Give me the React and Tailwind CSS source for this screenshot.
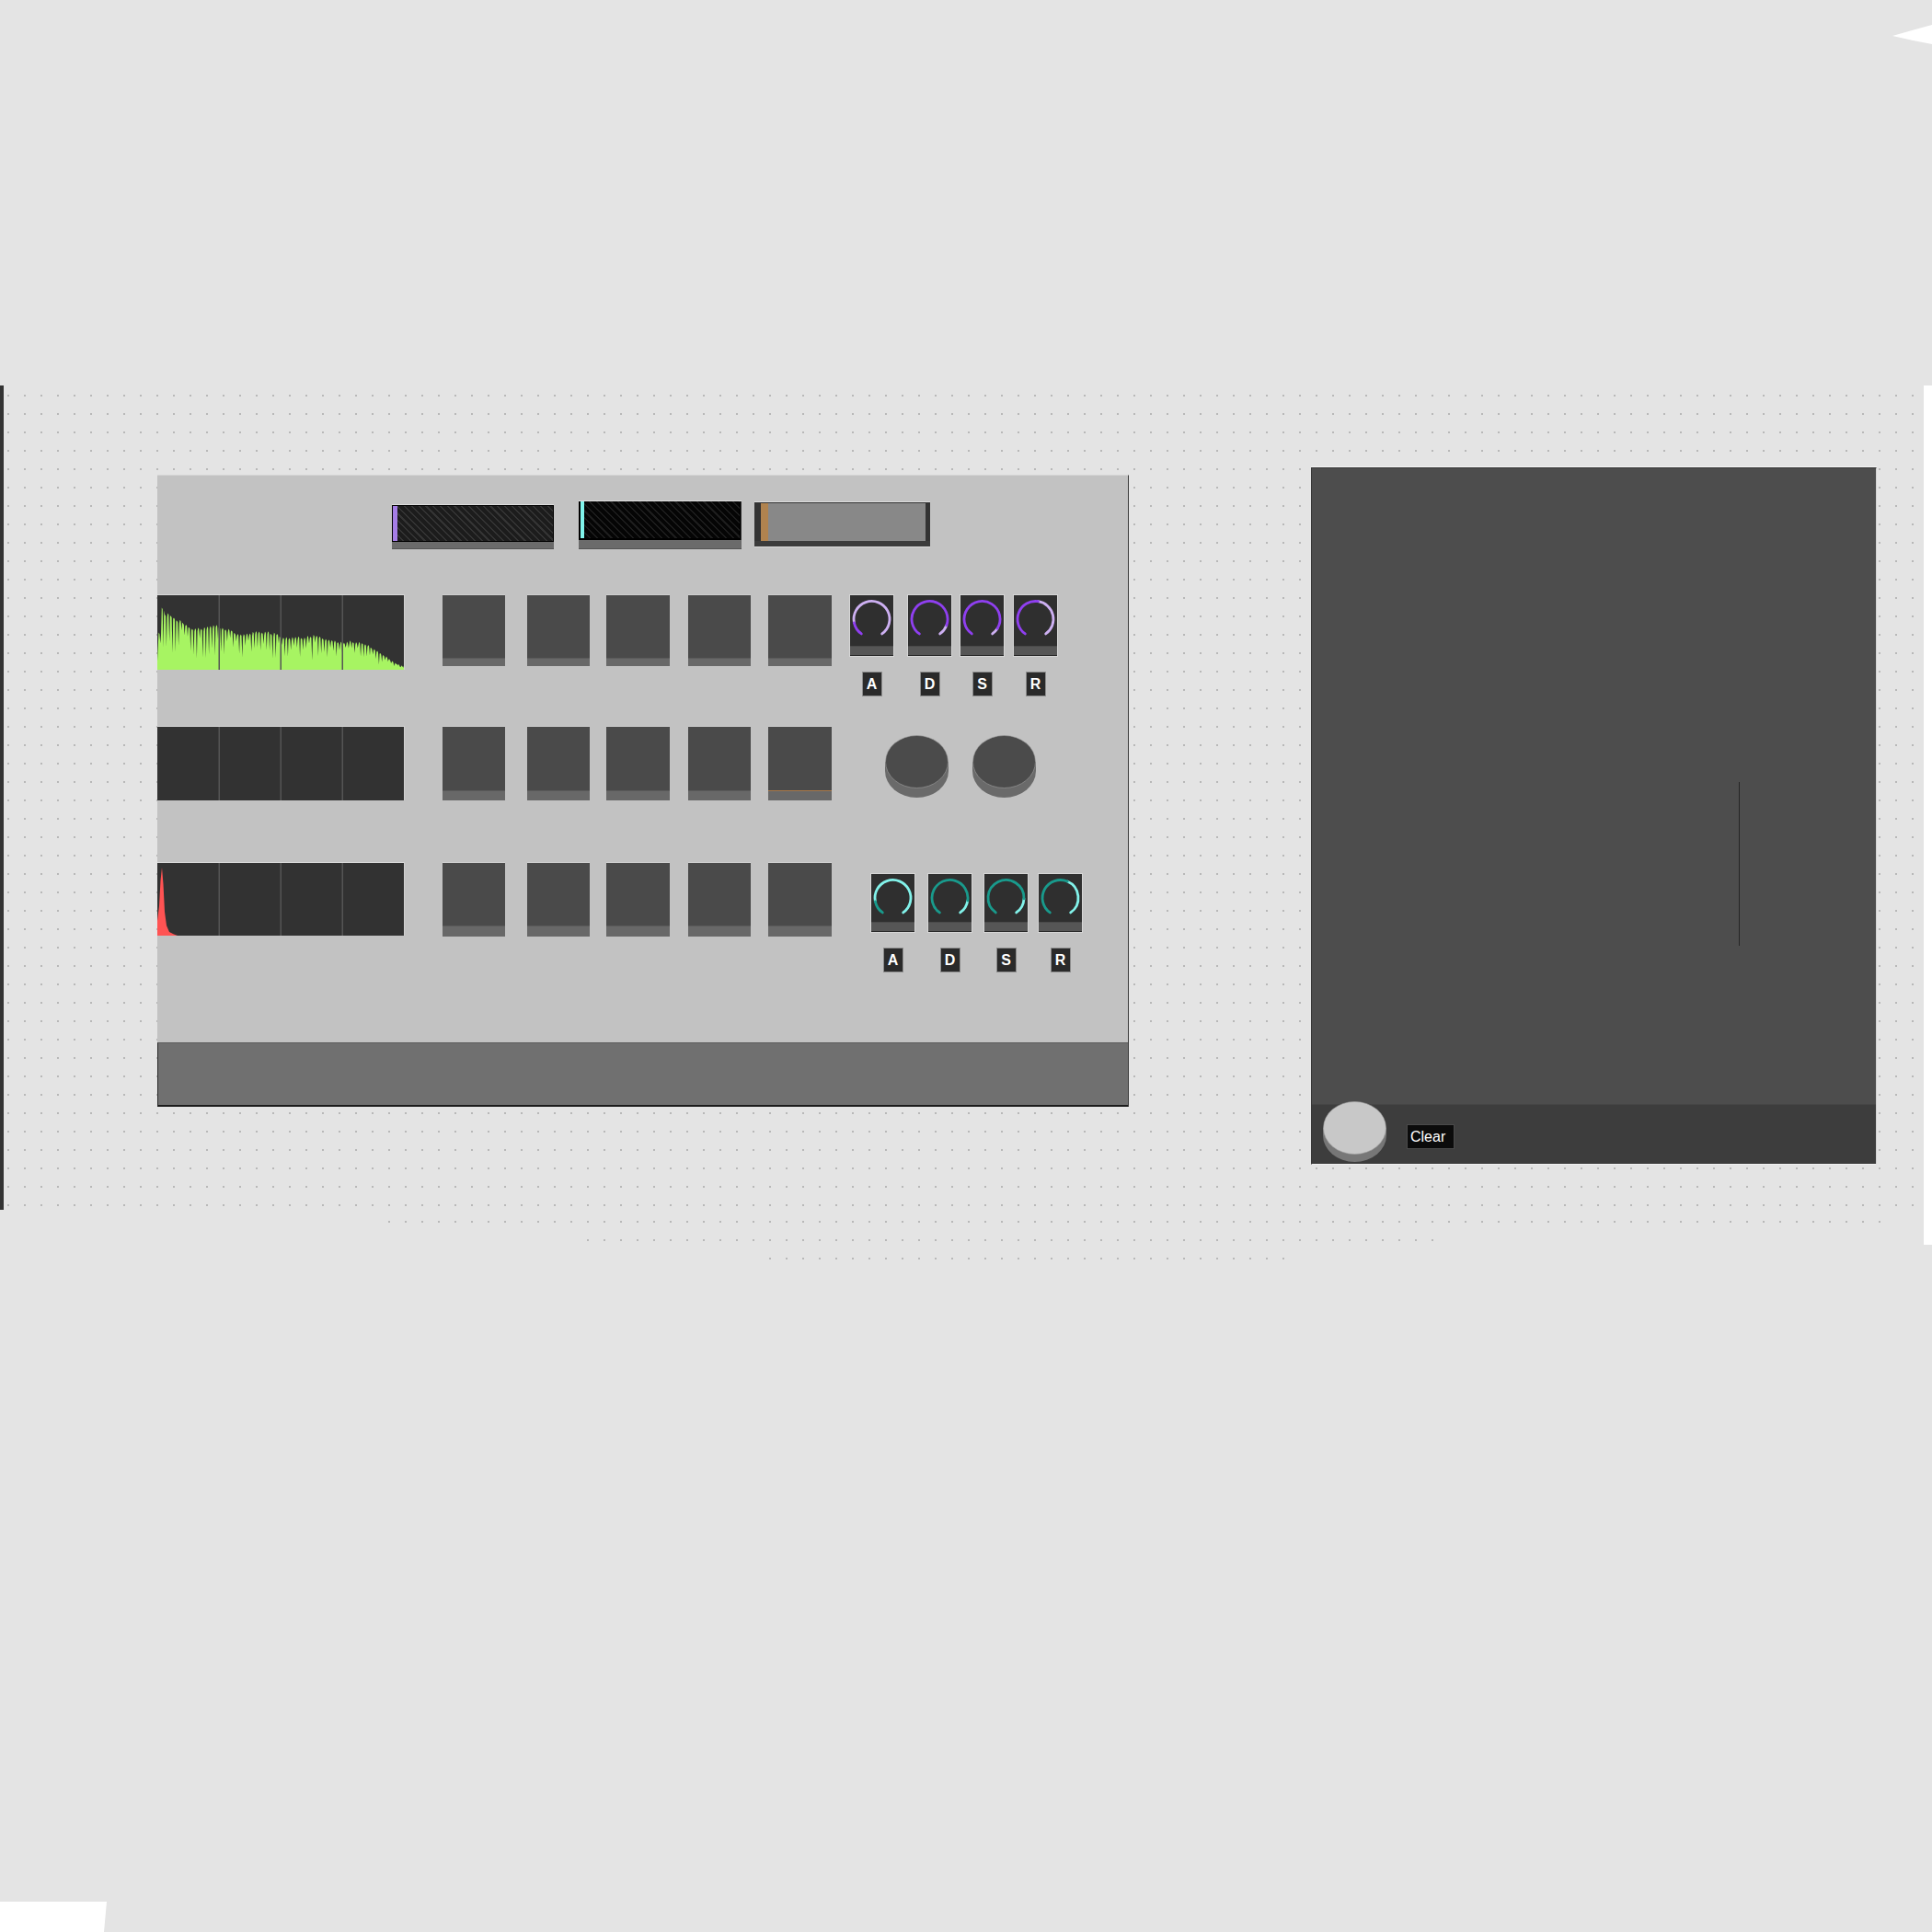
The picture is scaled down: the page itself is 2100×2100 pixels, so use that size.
import React from "react";

function rand(seed) {
  let s = seed;
  return () => {
    s = (s * 16807) % 2147483647;
    return (s - 1) / 2147483646;
  };
}

const envPts = [
  [0, 0.12], [0.01, 0.83], [0.03, 0.73], [0.06, 0.67], [0.15, 0.6], [0.25, 0.55],
  [0.4, 0.5], [0.5, 0.46], [0.6, 0.44], [0.72, 0.41], [0.8, 0.37], [0.87, 0.29],
  [0.92, 0.2], [0.96, 0.1], [1, 0.04],
];
function lerpEnv(t) {
  for (let i = 1; i < envPts.length; i++) {
    if (t <= envPts[i][0]) {
      const [t0, v0] = envPts[i - 1];
      const [t1, v1] = envPts[i];
      return v0 + ((v1 - v0) * (t - t0)) / (t1 - t0);
    }
  }
  return 0.04;
}
function makeGreen(W, H) {
  const r = rand(17);
  let d = `M0 ${H} L0 ${(H - 0.12 * H).toFixed(1)}`;
  for (let x = 1.5; x < W - 2; x += 3.3) {
    const t = x / W;
    const e = lerpEnv(t) * (1 + 0.06 * Math.sin(x * 0.12));
    const top = H - e * H * (0.95 + 0.07 * r());
    const depth = 0.2 + 0.55 * r();
    const dip = H - e * H * (1 - depth);
    d += ` L${x.toFixed(1)} ${top.toFixed(1)} L${(x + 0.9).toFixed(1)} ${(top + 1.5).toFixed(1)} L${(x + 1.8).toFixed(1)} ${dip.toFixed(1)} L${(x + 2.5).toFixed(1)} ${(top + 3).toFixed(1)}`;
  }
  d += ` L${W} ${H - 1} L${W} ${H} Z`;
  return d;
}
const GREEN = makeGreen(269, 82);

function WaveBox({ h, kind }) {
  const W = 269;
  return (
    <svg width={W} height={h} className="block shrink-0">
      <rect x="0" y="0" width={W} height={h} fill="#323232" />
      {kind === "green" && <path d={GREEN} fill="#a7f462" />}
      {kind === "red" && (
        <path
          d={`M0 ${h} L0 ${h - 16} L2 ${h - 32} L3.5 ${h - 60} L5 ${h - 74} L6.5 ${h - 56} L8 ${h - 26} L10 ${h - 11} L13 ${h - 4} L18 ${h - 1.5} L22 ${h} Z`}
          fill="#ff5353"
        />
      )}
      <rect x="66.5" y="0" width="1.5" height={h} fill="#555" />
      <rect x="133.5" y="0" width="1.5" height={h} fill="#555" />
      <rect x="200.5" y="0" width="1.5" height={h} fill="#555" />
      <rect x="0" y="0" width={W} height="1" fill="#d9d9d9" />
      <rect x={W - 1} y="0" width="1" height={h} fill="#d0d0d0" />
    </svg>
  );
}

function Pad({ w, h, strip, orange }) {
  return (
    <div
      className="flex flex-col bg-[#4a4a4a] border-t border-[#cfcfcf] shrink-0"
      style={{ width: w, height: h }}
    >
      <div className="flex-1" />
      <div
        className={orange ? "bg-[#686868] border-t border-[#a97a4a]" : "bg-[#686868] border-t border-[#5a5a5a]"}
        style={{ height: strip }}
      />
    </div>
  );
}

function arcPath(cx, cy, r, a0, a1) {
  const p = (a) => [cx + r * Math.sin((a * Math.PI) / 180), cy - r * Math.cos((a * Math.PI) / 180)];
  const [x0, y0] = p(a0);
  const [x1, y1] = p(a1);
  const large = a1 - a0 > 180 ? 1 : 0;
  return `M${x0.toFixed(2)} ${y0.toFixed(2)} A${r} ${r} 0 ${large} 1 ${x1.toFixed(2)} ${y1.toFixed(2)}`;
}

function Knob({ h, value, main, rest }) {
  const w = 49;
  const cx = 23.5;
  const cy = 26;
  const r = 19.5;
  const va = -145 + 290 * value;
  return (
    <div className="flex flex-col bg-[#2f2f2f] border border-[#d6d6d6] shrink-0" style={{ width: w, height: h }}>
      <svg width={w - 2} height={h - 13} className="block">
        <path d={arcPath(cx, cy, r, va, 145)} stroke={rest} strokeWidth="2.8" fill="none" strokeLinecap="round" />
        <path d={arcPath(cx, cy, r, -145, va)} stroke={main} strokeWidth="2.8" fill="none" strokeLinecap="round" />
      </svg>
      <div className="flex-1 bg-[#565656] border-t border-[#4a4a4a] border-b border-b-[#2a2a2a]" />
    </div>
  );
}

function Label({ t }) {
  return (
    <div className="w-[22px] h-[27px] bg-[#2a2a2a] border border-[#8c8c8c] flex items-center justify-center text-white text-[16px] font-bold leading-none font-['Liberation_Sans',Arial,sans-serif]">
      {t}
    </div>
  );
}

function Cylinder({ w, h, top, side }) {
  const rx = w / 2;
  const ry = 29;
  const off = h - 2 * ry;
  return (
    <svg width={w} height={h} className="block shrink-0">
      <path d={`M0 ${ry} L0 ${ry + off} A${rx} ${ry} 0 0 0 ${w} ${ry + off} L${w} ${ry} Z`} fill={side} />
      <ellipse cx={rx} cy={ry} rx={rx - 0.5} ry={ry - 0.5} fill={top} stroke="#a0a0a0" strokeWidth="0.6" />
    </svg>
  );
}

const dotBg =
  "bg-[radial-gradient(circle_at_center,#b8b8b8_0.9px,transparent_1.5px)] bg-size-[18px_20px]";

const purple = { main: "#8f3ff0", rest: "#cdb0f2" };
const teal = { main: "#199a8c", rest: "#82f2ea" };

function LeftPanel() {
  return (
    <div className="w-[1056px] h-[687px] mt-[96px] ml-[171px] shrink-0 flex flex-col bg-[#c2c2c2] border-r border-[#3a3a3a] border-t border-t-[#d4d4d4]">
      {/* slider row */}
      <div className="h-[80px] flex items-start pl-[255px]">
        <div className="w-[176px] h-[49px] mt-[31px] flex flex-col border-t border-[#dedede]">
          <div className="flex-1 bg-black flex p-[1px]">
            <div className="w-[5px] bg-[#a57de6]" />
            <div className="flex-1 bg-[repeating-linear-gradient(45deg,#1c1c1c_0px,#1c1c1c_4px,#343434_4px,#343434_5.5px)]" />
          </div>
          <div className="h-[8px] bg-[#6b6b6b] border-b border-[#555]" />
        </div>
        <div className="w-[177px] h-[53px] mt-[27px] ml-[27px] flex flex-col border-t border-[#dedede]">
          <div className="flex-1 bg-black flex pl-[2px] pr-[1px] pb-[2px] border-r border-[#333]">
            <div className="w-[4px] bg-[#80f4ec]" />
            <div className="flex-1 bg-[repeating-linear-gradient(45deg,#050505_0px,#050505_4px,#1d1d1d_4px,#1d1d1d_5.5px)]" />
          </div>
          <div className="h-[10px] bg-[#6b6b6b] border-b border-[#555]" />
        </div>
        <div className="w-[191px] h-[50px] mt-[28px] ml-[14px] flex flex-col border-t border-[#dedede]">
          <div className="flex-1 bg-[#333] flex pl-[7px] pr-[5px] pt-[1px]">
            <div className="w-[8px] bg-[#b0834f]" />
            <div className="flex-1 bg-[#888888]" />
          </div>
          <div className="h-[7px] bg-[#3b3b3b] border-b border-[#dcdcdc]" />
        </div>
      </div>

      {/* row 1 */}
      <div className="mt-[49px] h-[112px] flex items-start">
        <WaveBox h={82} kind="green" />
        <div className="flex items-start ml-[41px]">
          <Pad w={68} h={78} strip={9} />
          <div className="ml-[24px]"><Pad w={68} h={78} strip={9} /></div>
          <div className="ml-[18px]"><Pad w={69} h={78} strip={9} /></div>
          <div className="ml-[20px]"><Pad w={68} h={78} strip={9} /></div>
          <div className="ml-[19px]"><Pad w={69} h={78} strip={9} /></div>
        </div>
        <div className="ml-[19px] flex flex-col">
          <div className="flex">
            <Knob h={68} value={0.15} {...purple} />
            <div className="ml-[14px]"><Knob h={68} value={0.88} {...purple} /></div>
            <div className="ml-[8px]"><Knob h={68} value={0.92} {...purple} /></div>
            <div className="ml-[9px]"><Knob h={68} value={0.53} {...purple} /></div>
          </div>
          <div className="flex mt-[16px]">
            <div className="w-[49px] flex justify-center"><Label t="A" /></div>
            <div className="w-[49px] ml-[14px] flex justify-center"><Label t="D" /></div>
            <div className="w-[49px] ml-[8px] flex justify-center"><Label t="S" /></div>
            <div className="w-[49px] ml-[9px] flex justify-center"><Label t="R" /></div>
          </div>
        </div>
      </div>

      {/* row 2 */}
      <div className="mt-[31px] h-[81px] flex items-start">
        <WaveBox h={81} kind="none" />
        <div className="flex items-start ml-[41px]">
          <Pad w={68} h={81} strip={11} />
          <div className="ml-[24px]"><Pad w={68} h={81} strip={11} /></div>
          <div className="ml-[18px]"><Pad w={69} h={81} strip={11} /></div>
          <div className="ml-[20px]"><Pad w={68} h={81} strip={11} /></div>
          <div className="ml-[19px]"><Pad w={69} h={81} strip={11} orange /></div>
        </div>
        <div className="ml-[58px] mt-[10px] flex">
          <Cylinder w={69} h={68} top="#4b4b4b" side="#6a6a6a" />
          <div className="ml-[26px]"><Cylinder w={69} h={68} top="#4b4b4b" side="#6a6a6a" /></div>
        </div>
      </div>

      {/* row 3 */}
      <div className="mt-[67px] flex items-start">
        <WaveBox h={80} kind="red" />
        <div className="flex items-start ml-[41px]">
          <Pad w={68} h={81} strip={12} />
          <div className="ml-[24px]"><Pad w={68} h={81} strip={12} /></div>
          <div className="ml-[18px]"><Pad w={69} h={81} strip={12} /></div>
          <div className="ml-[20px]"><Pad w={68} h={81} strip={12} /></div>
          <div className="ml-[19px]"><Pad w={69} h={81} strip={12} /></div>
        </div>
        <div className="ml-[42px] mt-[12px] flex flex-col">
          <div className="flex">
            <Knob h={65} value={0.15} {...teal} />
            <div className="ml-[13px]"><Knob h={65} value={0.84} {...teal} /></div>
            <div className="ml-[12px]"><Knob h={65} value={0.82} {...teal} /></div>
            <div className="ml-[10px]"><Knob h={65} value={0.58} {...teal} /></div>
          </div>
          <div className="flex mt-[16px]">
            <div className="w-[49px] flex justify-center"><Label t="A" /></div>
            <div className="w-[49px] ml-[13px] flex justify-center"><Label t="D" /></div>
            <div className="w-[49px] ml-[12px] flex justify-center"><Label t="S" /></div>
            <div className="w-[49px] ml-[10px] flex justify-center"><Label t="R" /></div>
          </div>
        </div>
      </div>

      <div className="flex-1" />
      <div className="h-[70px] bg-[#707070] border-t border-[#5c5c5c] border-b-2 border-b-[#1c1c1c] border-l border-l-[#2a2a2a]" />
    </div>
  );
}

function RightPanel() {
  return (
    <div className="w-[615px] h-[759px] mt-[87px] ml-[198px] shrink-0 flex flex-col border-t border-[#f6f6f6]">
      <div className="flex-1 flex flex-col border-t border-l border-[#363636] border-r border-r-[#d4d4d4] border-b border-b-[#f0f0f0]">
        <div className="flex-1 bg-[#4d4d4d] pl-[464px] pt-[341px]">
          <div className="w-px h-[178px] bg-[#262626]" />
        </div>
        <div className="h-[65px] bg-[#3d3d3d] border-t border-[#454545] flex items-start pl-[12px]">
          <div className="-mt-[4px]">
            <Cylinder w={69} h={66} top="#c8c8c8" side="#777777" />
          </div>
          <div className="ml-[22px] mt-[21px] w-[52px] h-[27px] bg-[#0b0b0b] border border-[#4a4a4a] flex items-center pl-[3px] text-white text-[16px] leading-none font-['Liberation_Sans',Arial,sans-serif]">
            Clear
          </div>
        </div>
      </div>
    </div>
  );
}

export default function App() {
  return (
    <div className="relative w-[2100px] h-[2100px] overflow-hidden bg-[#e4e4e4] flex flex-col">
      <div className="h-[420px] shrink-0" />
      <div className={`h-[898px] w-[2100px] shrink-0 flex items-start ${dotBg}`}>
        <LeftPanel />
        <RightPanel />
      </div>
      <div className={`h-[20px] ml-[414px] w-[1638px] shrink-0 ${dotBg}`} />
      <div className={`h-[20px] ml-[630px] w-[936px] shrink-0 ${dotBg}`} />
      <div className={`h-[20px] ml-[828px] w-[576px] shrink-0 ${dotBg}`} />

      {/* overlays on the canvas edges */}
      <div className="absolute left-0 top-[419px] w-[4px] h-[896px] bg-[#333333]" />
      <div className="absolute right-0 top-[419px] w-[9px] h-[934px] bg-white" />
      <svg className="absolute right-0 top-0" width="50" height="60">
        <path d="M7 39 Q28 33 50 27 L50 48 Q28 44 7 39 Z" fill="#ffffff" />
      </svg>
      <svg className="absolute left-0 bottom-0" width="120" height="34">
        <path d="M0 1 L116 1 L113 34 L0 34 Z" fill="#ffffff" />
      </svg>
    </div>
  );
}
